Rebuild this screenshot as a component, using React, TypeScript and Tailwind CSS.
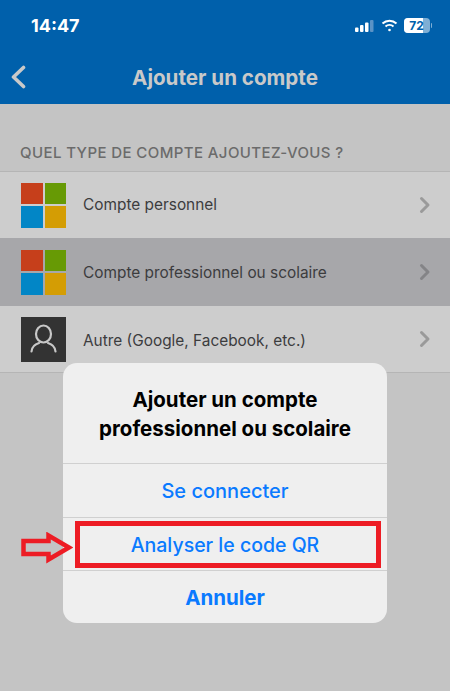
import React from "react";

function MsLogo() {
  return (
    <div className="grid h-[45px] w-[45px] shrink-0 grid-cols-2 gap-[2px]">
      <div className="bg-[#c63f1b]" />
      <div className="bg-[#679a05]" />
      <div className="bg-[#0286c6]" />
      <div className="bg-[#d49d04]" />
    </div>
  );
}

function Person() {
  return (
    <div className="flex h-[45px] w-[45px] shrink-0 items-center justify-center bg-[#333333]">
      <svg width="45" height="45" viewBox="0 0 45 45" fill="none" stroke="#c8c8c8" strokeWidth="2.2">
        <ellipse cx="22.500" cy="17" rx="7.500" ry="8.500" />
        <path d="M10.500 34.500c0.500-5 4-7.500 7.500-8.500M34.500 34.500c-0.500-5-4-7.500-7.500-8.500" strokeLinecap="round" />
      </svg>
    </div>
  );
}

function Chevron({ selected }: { selected?: boolean }) {
  return (
    <svg width="12" height="18" viewBox="0 0 12 18" fill="none" stroke={selected ? "#848487" : "#9a9a9a"} strokeWidth="3" strokeLinecap="round" strokeLinejoin="round" className="shrink-0">
      <path d="M2.500 2.500 9 9l-6.500 6.500" />
    </svg>
  );
}

function Row({ icon, label, selected, className, textClass }: { icon: React.ReactNode; label: string; selected?: boolean; className: string; textClass?: string }) {
  return (
    <div className={`flex items-center pl-[21px] pr-[19px] ${selected ? "bg-[#a7a7aa]" : "bg-[#cdcdcd]"} ${className}`}>
      {icon}
      <span className={`ml-[17px] flex-1 text-[15.400px] text-[#3c3c3e] ${textClass ?? ""}`}>{label}</span>
      <Chevron selected={selected} />
    </div>
  );
}

export default function App() {
  return (
    <div className="relative h-[691px] w-[450px] overflow-hidden bg-[#c4c4c4] font-['Inter','Liberation_Sans',sans-serif]">
      <header className="h-[104px] bg-[#0060ab]">
        <div className="flex h-[51px] items-center justify-between pl-[31px] pr-[18px]">
          <span className="text-[18px] font-bold leading-none text-white">14:47</span>
          <div className="flex items-center gap-[6px]">
            <svg width="20" height="13" viewBox="0 0 20 13">
              <rect x="0" y="8.500" width="3.500" height="4.500" rx="1" fill="#fff" />
              <rect x="5" y="6" width="3.500" height="7" rx="1" fill="#fff" />
              <rect x="10" y="3.500" width="3.500" height="9.500" rx="1" fill="#fff" />
              <rect x="15" y="1" width="3.500" height="12" rx="1" fill="#5a93c6" />
            </svg>
            <svg width="17" height="13" viewBox="0 0 17 13" fill="none" stroke="#fff" strokeWidth="2">
              <path d="M1.500 4.500c4-3.800 10-3.800 14 0" />
              <path d="M4.500 7.500c2.300-2 5.700-2 8 0" />
              <circle cx="8.500" cy="11" r="1.300" fill="#fff" stroke="none" />
            </svg>
            <div className="flex items-center">
              <div className="relative flex h-[15px] w-[26px] items-center justify-center overflow-hidden rounded-[4px] bg-[#7fafd5]">
                <div className="absolute inset-y-0 left-0 w-[19px] bg-white" />
                <span className="relative text-[12px] font-bold leading-none text-[#0060ab]">72</span>
              </div>
              <div className="ml-[1px] h-[5px] w-[1.500px] rounded-r-sm bg-[#7fafd5]" />
            </div>
          </div>
        </div>
        <div className="relative flex h-[52px] items-center justify-center pt-[2px]">
          <svg width="16" height="24" viewBox="0 0 16 24" fill="none" stroke="#c9c9c9" strokeWidth="3.600" strokeLinecap="round" strokeLinejoin="round" className="absolute left-[10px] top-[14px]">
            <path d="M13.500 2.500 3.500 12l10 9.500" />
          </svg>
          <h1 className="text-[20.600px] font-bold text-[#c9c9c9]">Ajouter un compte</h1>
        </div>
      </header>

      <div className="flex h-[67px] items-end pb-[9px] pl-[20px] text-[15px] font-medium leading-[18px] tracking-[0.4px] text-[#6b6b6b]">
        QUEL TYPE DE COMPTE AJOUTEZ-VOUS ?
      </div>
      <div>
        <Row icon={<MsLogo />} label="Compte personnel" className="h-[67px] border-t border-[#b5b5b5]" />
        <Row icon={<MsLogo />} label="Compte professionnel ou scolaire" selected className="h-[68px]" textClass="pt-[2px]" />
        <Row icon={<Person />} label="Autre (Google, Facebook, etc.)" className="h-[67px] border-b border-[#b5b5b5]" textClass="pt-[3px]" />
      </div>

      <div className="absolute left-[63px] top-[363px] w-[324px] overflow-hidden rounded-[14px] bg-[#efefef] text-center">
        <div className="flex h-[100px] items-center justify-center pt-[1px] text-[20.500px] font-bold leading-[29px] text-black">
          <div>
            Ajouter un compte
            <br />
            professionnel ou scolaire
          </div>
        </div>
        <div className="flex h-[54px] items-center justify-center border-t border-[#d0d0d0] text-[20px] font-medium text-[#0a7aff]">Se connecter</div>
        <div className="flex h-[53px] items-center justify-center border-t border-[#d0d0d0] pt-[3px] text-[19.500px] font-medium text-[#0a7aff]">Analyser le code QR</div>
        <div className="flex h-[53px] items-center justify-center border-t border-[#d0d0d0] pt-[3px] text-[20.500px] font-bold text-[#0a7aff]">Annuler</div>
      </div>

      <div className="absolute left-[75px] top-[521px] h-[47px] w-[306px] border-[5px] border-[#ed1c24]" />
      <svg width="52" height="32" viewBox="0 0 52 32" fill="none" className="absolute left-[21px] top-[532px]">
        <path d="M2.500 9H27.500V3.500L48 15.500 27.500 27.500V22H2.500Z" stroke="#ed1c24" strokeWidth="4.500" strokeLinejoin="miter" />
      </svg>
    </div>
  );
}
